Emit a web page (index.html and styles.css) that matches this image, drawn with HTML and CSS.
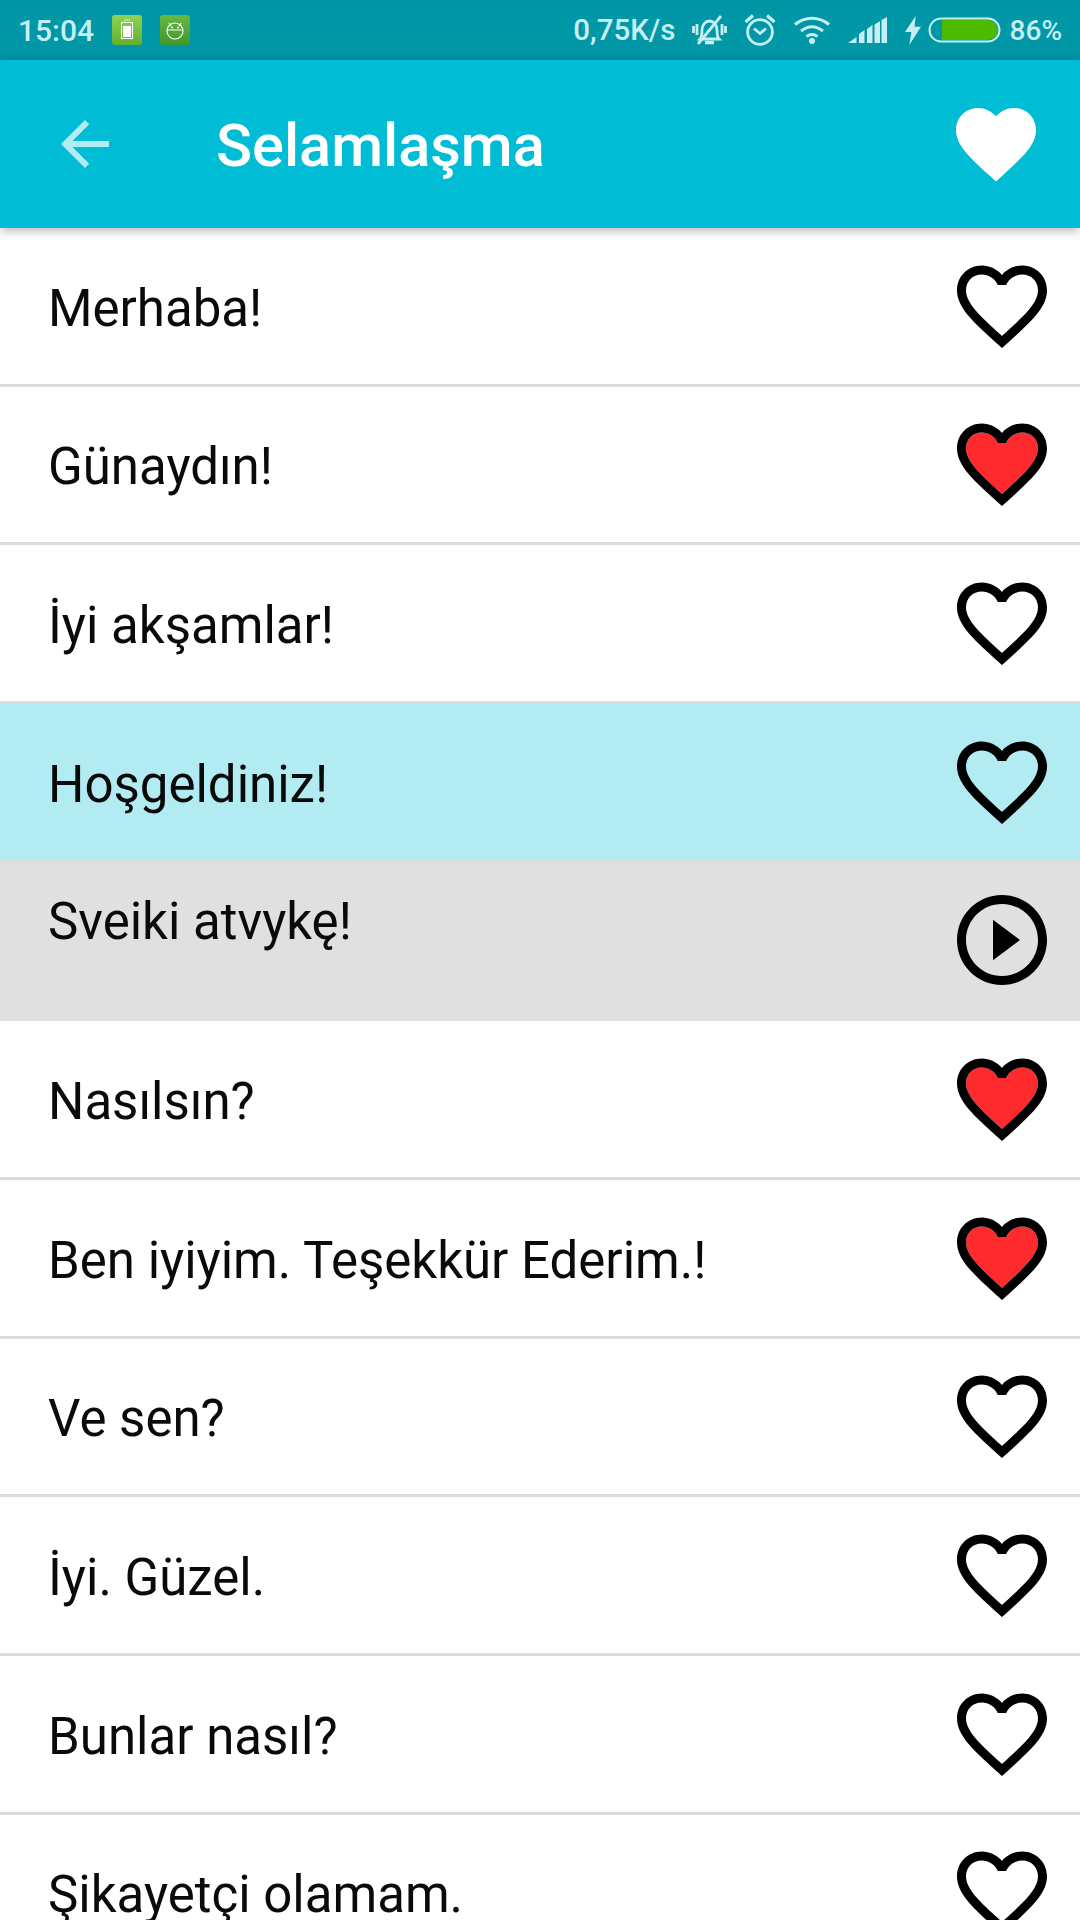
FILE: index.html
```html
<!DOCTYPE html>
<html lang="en">

<head>
  <meta charset="UTF-8" />
  <meta name="viewport" content="width=device-width, initial-scale=1.0" />
  <title>Selamlaşma</title>
  <link rel="stylesheet" href="styles.css">
</head>

<body>
  <svg class="defs" width="0" height="0">
    <defs>
      <symbol id="heart-border" viewBox="0 0 24 24">
        <path d="M16.5 3c-1.74 0-3.41.81-4.5 2.09C10.91 3.81 9.24 3 7.5 3 4.42 3 2 5.42 2 8.5c0 3.78 3.4 6.86 8.55 11.54L12 21.35l1.45-1.32C18.6 15.36 22 12.28 22 8.5 22 5.42 19.58 3 16.5 3zm-4.4 15.55l-.1.1-.1-.1C7.14 14.24 4 11.39 4 8.5 4 6.5 5.5 5 7.5 5c1.54 0 3.04.99 3.57 2.36h1.87C13.46 5.99 14.96 5 16.5 5c2 0 3.5 1.5 3.5 3.5 0 2.89-3.14 5.74-7.9 10.05z" />
      </symbol>
      <symbol id="heart-red" viewBox="0 0 24 24">
        <path fill="#ff2a2e" d="M12.1 18.55l-.1.1-.1-.1C7.14 14.24 4 11.39 4 8.5 4 6.5 5.5 5 7.5 5c1.54 0 3.04.99 3.57 2.36h1.87C13.46 5.99 14.96 5 16.5 5c2 0 3.5 1.5 3.5 3.5 0 2.89-3.14 5.74-7.9 10.05z" />
        <path d="M16.5 3c-1.74 0-3.41.81-4.5 2.09C10.91 3.81 9.24 3 7.5 3 4.42 3 2 5.42 2 8.5c0 3.78 3.4 6.86 8.55 11.54L12 21.35l1.45-1.32C18.6 15.36 22 12.28 22 8.5 22 5.42 19.58 3 16.5 3zm-4.4 15.55l-.1.1-.1-.1C7.14 14.24 4 11.39 4 8.5 4 6.5 5.5 5 7.5 5c1.54 0 3.04.99 3.57 2.36h1.87C13.46 5.99 14.96 5 16.5 5c2 0 3.5 1.5 3.5 3.5 0 2.89-3.14 5.74-7.9 10.05z" />
      </symbol>
      <linearGradient id="tile-light" x1="0" y1="0" x2="0" y2="1">
        <stop offset="0" stop-color="#8fd354" />
        <stop offset="1" stop-color="#62b02e" />
      </linearGradient>
      <linearGradient id="tile-dark" x1="0" y1="0" x2="0" y2="1">
        <stop offset="0" stop-color="#68b843" />
        <stop offset="1" stop-color="#3f9728" />
      </linearGradient>
    </defs>
  </svg>

  <div class="status-bar">
    <div class="status-left">
      <span class="status-time">15:04</span>
      <svg class="tile" viewBox="0 0 30 30">
        <rect width="30" height="30" rx="3" fill="url(#tile-light)" />
        <rect x="9.500" y="7.500" width="11" height="16" fill="none" stroke="#fff" />
        <rect x="12" y="4.500" width="6" height="1" fill="#fff" opacity=".7" />
        <rect x="11" y="11" width="8" height="11" fill="#fff" />
      </svg>
      <svg class="tile" viewBox="0 0 30 30">
        <rect width="30" height="30" rx="3" fill="url(#tile-dark)" />
        <circle cx="15" cy="16" r="8" fill="none" stroke="#fff" stroke-width="1.200" />
        <path d="M7 15h16M9 8l2 3M21 8l-2 3" fill="none" stroke="#fff" stroke-width="1.200" />
        <circle cx="12" cy="12.500" r="1" fill="#fff" />
        <circle cx="18" cy="12.500" r="1" fill="#fff" />
      </svg>
    </div>
    <div class="status-right">
      <span class="status-text">0,75K/s</span>
      <svg class="ic-bell" viewBox="0 0 35 32" fill="none" stroke="#c6eef3" stroke-width="2.800">
        <path d="M8 25c2-2 2-5 2-9 0-5 3.500-9 7.500-9s7.500 4 7.500 9c0 4 0 7 2 9z" />
        <path d="M13 28.500h9" stroke-width="3.500" />
        <path d="M5 10v11M1.500 12v7M30 10v11M33.500 12v7" />
        <path d="M6 30 29 2" />
      </svg>
      <svg class="ic-alarm" viewBox="0 0 32 32" fill="none" stroke="#c6eef3" stroke-width="2.800">
        <circle cx="16" cy="18" r="12.400" />
        <path d="M10 14.500l6 5 6-5" />
        <path d="M1.500 8 9 1.500M30.500 8 23 1.500" stroke-width="3.200" />
      </svg>
      <svg class="ic-wifi" viewBox="0 0 38 28" fill="none" stroke="#c6eef3" stroke-width="3">
        <path d="M2 8.500c10-8.500 24-8.500 34 0" />
        <path d="M8 15c7-5.500 15-5.500 22 0" />
        <path d="M13.500 20.500c3.500-2.500 7.500-2.500 11 0" />
        <circle cx="19" cy="25" r="3" fill="#c6eef3" stroke="none" />
      </svg>
      <svg class="ic-signal" viewBox="0 0 39 26" fill="#c6eef3">
        <path d="M0 26 8.500 20v6z" />
        <path d="M11 17 16.500 13v13H11z" />
        <path d="M19 12 24.500 8v18H19z" />
        <path d="M26.500 7.500 32 4v22h-5.500z" />
        <path d="M33.500 3 39 0v26h-5.500z" />
      </svg>
      <svg class="ic-bolt" viewBox="0 0 15 27" fill="#c6eef3">
        <path d="M10 0 0 15h6L4 27 15 10H9z" />
      </svg>
      <svg class="ic-battery" viewBox="0 0 73 26">
        <rect x="1.500" y="1.500" width="70" height="23" rx="11.500" fill="none" stroke="#c6eef3" stroke-width="2" />
        <path d="M14 3h46a10 10 0 0 1 0 20H14z" fill="#4cbb00" />
      </svg>
      <span class="status-text status-pct">86%</span>
    </div>
  </div>

  <div class="app-bar">
    <svg class="back-icon" viewBox="0 0 24 24">
      <path d="M20 11H7.830l5.590-5.590L12 4l-8 8 8 8 1.410-1.410L7.830 13H20v-2z" />
    </svg>
    <h1 class="app-title">Selamlaşma</h1>
    <svg class="fav-icon" viewBox="0 0 24 24">
      <path d="M12 21.350l-1.450-1.320C5.400 15.360 2 12.280 2 8.500 2 5.420 4.420 3 7.500 3c1.740 0 3.410.810 4.500 2.090C13.090 3.810 14.760 3 16.500 3 19.580 3 22 5.420 22 8.500c0 3.780-3.400 6.860-8.550 11.540L12 21.350z" />
    </svg>
  </div>

  <div class="list">
    <div class="row">
      <span class="phrase">Merhaba!</span>
      <svg class="row-icon"><use href="#heart-border" /></svg>
    </div>
    <div class="row">
      <span class="phrase">Günaydın!</span>
      <svg class="row-icon"><use href="#heart-red" /></svg>
    </div>
    <div class="row">
      <span class="phrase">İyi akşamlar!</span>
      <svg class="row-icon"><use href="#heart-border" /></svg>
    </div>
    <div class="row row-active">
      <span class="phrase">Hoşgeldiniz!</span>
      <svg class="row-icon"><use href="#heart-border" /></svg>
    </div>
    <div class="row row-translation">
      <span class="phrase">Sveiki atvykę!</span>
      <svg class="row-icon" viewBox="0 0 24 24">
        <path d="M10 16.500l6-4.500-6-4.500v9zM12 2C6.480 2 2 6.480 2 12s4.480 10 10 10 10-4.480 10-10S17.520 2 12 2zm0 18c-4.410 0-8-3.590-8-8s3.590-8 8-8 8 3.590 8 8-3.590 8-8 8z" />
      </svg>
    </div>
    <div class="row">
      <span class="phrase">Nasılsın?</span>
      <svg class="row-icon"><use href="#heart-red" /></svg>
    </div>
    <div class="row">
      <span class="phrase">Ben iyiyim. Teşekkür Ederim.!</span>
      <svg class="row-icon"><use href="#heart-red" /></svg>
    </div>
    <div class="row">
      <span class="phrase">Ve sen?</span>
      <svg class="row-icon"><use href="#heart-border" /></svg>
    </div>
    <div class="row">
      <span class="phrase">İyi. Güzel.</span>
      <svg class="row-icon"><use href="#heart-border" /></svg>
    </div>
    <div class="row">
      <span class="phrase">Bunlar nasıl?</span>
      <svg class="row-icon"><use href="#heart-border" /></svg>
    </div>
    <div class="row">
      <span class="phrase">Şikayetçi olamam.</span>
      <svg class="row-icon"><use href="#heart-border" /></svg>
    </div>
  </div>
</body>

</html>
```

FILE: styles.css
```css
body {
  margin: 0;
  height: 1920px;
  overflow: hidden;
  background-color: #fff;
  font-family: Roboto, "Noto Sans", sans-serif;
  color: #0a0a0a;
}

.defs {
  display: block;
}

/* status bar */
.status-bar {
  height: 60px;
  display: flex;
  align-items: center;
  justify-content: space-between;
  padding: 0 18px;
  box-sizing: border-box;
  background: linear-gradient(to bottom, #0093a3, #0097a7 30%);
}

.status-left,
.status-right {
  display: flex;
  align-items: center;
}

.status-time,
.status-text {
  font-size: 29.500px;
  font-weight: 500;
  color: #c6eef3;
}

.status-time {
  font-size: 30px;
}

.tile {
  width: 30px;
  height: 30px;
  margin-left: 18px;
}

.ic-bell {
  width: 35px;
  height: 32px;
  margin-left: 16px;
}

.ic-alarm {
  width: 32px;
  height: 32px;
  margin-left: 17px;
}

.ic-wifi {
  width: 38px;
  height: 28px;
  margin-left: 17px;
}

.ic-signal {
  width: 39px;
  height: 26px;
  margin-left: 17px;
}

.ic-bolt {
  width: 16px;
  height: 29px;
  margin-left: 18px;
}

.ic-battery {
  width: 73px;
  height: 26px;
  margin-left: 7px;
}

.status-pct {
  margin-left: 9px;
  font-size: 28px;
}

/* app bar */
.app-bar {
  position: relative;
  z-index: 1;
  height: 168px;
  display: flex;
  align-items: center;
  padding: 0 36px 0 49px;
  box-sizing: border-box;
  background-color: #00bcd4;
  box-shadow: 0 3px 10px rgba(0, 0, 0, 0.28);
}

.back-icon {
  width: 72px;
  height: 72px;
  fill: #b2ebf2;
}

.app-title {
  flex: 1;
  margin: 0 0 0 95px;
  padding-top: 4px;
  font-size: 59.500px;
  font-weight: 500;
  color: #fff;
}

.fav-icon {
  width: 96px;
  height: 96px;
  fill: #fff;
}

/* phrase list */
.row {
  height: 158.67px;
  display: flex;
  align-items: center;
  justify-content: space-between;
  padding: 0 24px 0 48px;
  box-sizing: border-box;
  border-bottom: 3px solid #dcdcdc;
}

.phrase {
  padding-top: 5px;
  font-size: 51px;
}

.row-icon {
  width: 108px;
  height: 108px;
  fill: #000;
}

.row-active {
  background-color: #b2ebf2;
}

.row-translation {
  background-color: #e0e0e0;
  border-bottom-color: #e0e0e0;
}

.row-translation .phrase {
  align-self: flex-start;
  margin-top: 24px;
}
```
